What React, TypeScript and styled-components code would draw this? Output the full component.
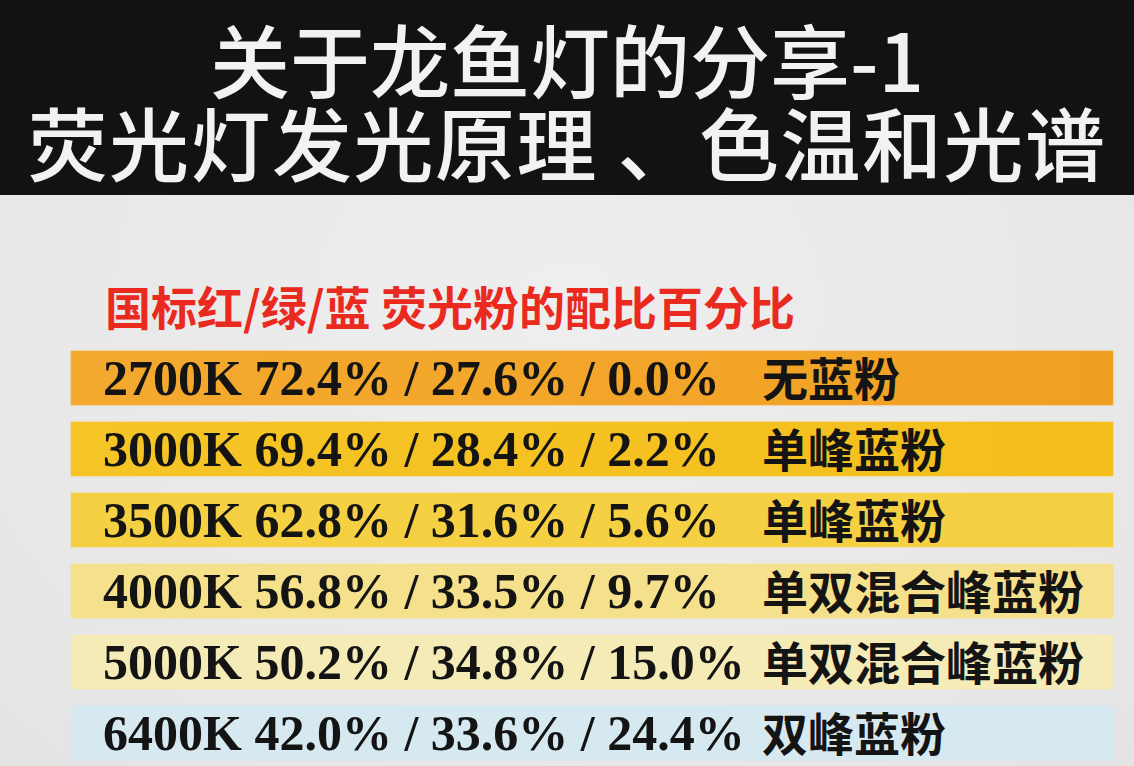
import React from "react";
import styled, { createGlobalStyle } from "styled-components";

const Global = createGlobalStyle`
  html, body { margin: 0; padding: 0; }
  body {
    width: 1134px;
    height: 766px;
    overflow: hidden;
    background: #e9e9e9;
    font-family: "Noto Sans CJK SC", "Noto Sans", sans-serif;
  }
`;

const Page = styled.div`
  width: 1134px;
  height: 766px;
  display: flex;
  flex-direction: column;
  background: radial-gradient(ellipse at 50% 40%, #eeeeee 0%, #e8e8e8 70%, #e4e4e4 100%);
`;

const Header = styled.header`
  height: 195px;
  box-sizing: border-box;
  padding-top: 16px;
  background: #121212;
  display: flex;
  flex-direction: column;
  align-items: center;
  color: #f2f2f2;
  font-family: "Noto Sans CJK SC", sans-serif;
  font-weight: 500;
  font-size: 80px;
  line-height: 83px;
  white-space: pre;
`;

const HeadLine = styled.div<{ $spacing?: number }>`
  letter-spacing: ${(p) => p.$spacing ?? 0}px;
`;

const Content = styled.main`
  flex: 1;
  display: flex;
  flex-direction: column;
  padding: 82px 21px 0 71px;
`;

const Title = styled.h2`
  margin: 0 0 18px 34px;
  color: #ea2a1f;
  font-family: "Noto Sans CJK SC", sans-serif;
  font-weight: 700;
  font-size: 46px;
  line-height: 56px;
`;

const Rows = styled.div`
  display: flex;
  flex-direction: column;
  gap: 17px;
`;

const Row = styled.div<{ $bg: string; $edge: string }>`
  height: 54px;
  background: ${(p) => p.$bg};
  box-shadow: 0 0 2px ${(p) => p.$edge};
  display: grid;
  grid-template-columns: 659px 1fr;
  align-items: center;
  padding-left: 32px;
  color: #141414;
  white-space: pre;
`;

const Nums = styled.span`
  font-family: "Liberation Serif", "Times New Roman", serif;
  font-weight: 700;
  font-size: 50px;
  line-height: 54px;
`;

const Desc = styled.span`
  font-family: "Noto Sans CJK SC", sans-serif;
  font-weight: 700;
  font-size: 46px;
  line-height: 50px;
  margin-top: -4px;
`;

const data = [
  { n: "2700K 72.4% / 27.6% / 0.0%", d: "无蓝粉", bg: "linear-gradient(90deg, #f3a92f, #f2a528 60%, #f0a020)", edge: "#f0a83a" },
  { n: "3000K 69.4% / 28.4% / 2.2%", d: "单峰蓝粉", bg: "linear-gradient(90deg, #f5c426, #f4bf1d)", edge: "#f2c440" },
  { n: "3500K 62.8% / 31.6% / 5.6%", d: "单峰蓝粉", bg: "#f4d042", edge: "#f0d060" },
  { n: "4000K 56.8% / 33.5% / 9.7%", d: "单双混合峰蓝粉", bg: "#f5e08b", edge: "#f0dc98" },
  { n: "5000K 50.2% / 34.8% / 15.0%", d: "单双混合峰蓝粉", bg: "#f5ebb7", edge: "#eee6bf" },
  { n: "6400K 42.0% / 33.6% / 24.4%", d: "双峰蓝粉", bg: "#d6e9f1", edge: "#d4e4ec" },
];

export default function App() {
  return (
    <>
      <Global />
      <Page>
        <Header>
          <HeadLine>关于龙鱼灯的分享-1</HeadLine>
          <HeadLine $spacing={1.5}>荧光灯发光原理 、色温和光谱</HeadLine>
        </Header>
        <Content>
          <Title>国标红/绿/蓝 荧光粉的配比百分比</Title>
          <Rows>
            {data.map((r) => (
              <Row key={r.n} $bg={r.bg} $edge={r.edge}>
                <Nums>{r.n}</Nums>
                <Desc>{r.d}</Desc>
              </Row>
            ))}
          </Rows>
        </Content>
      </Page>
    </>
  );
}
